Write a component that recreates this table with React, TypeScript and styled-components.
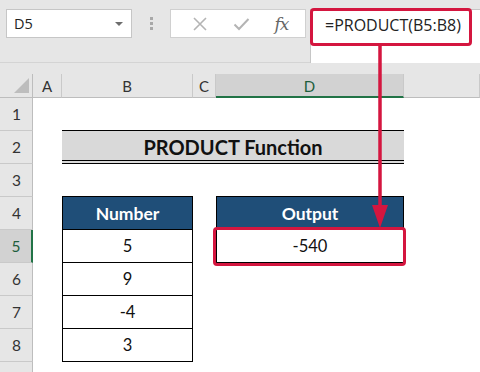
import * as React from "react";
import styled, { createGlobalStyle } from "styled-components";

const GlobalStyle = createGlobalStyle`
  html, body {
    margin: 0;
    padding: 0;
    background: #e6e6e6;
  }
  body {
    font-family: "Lato", "Open Sans", sans-serif;
  }
`;

const RED = "#d4163f";
const GREEN = "#217346";

const Page = styled.div`
  position: relative;
  width: 480px;
  height: 372px;
  overflow: hidden;
  display: flex;
  flex-direction: column;
  background: #e6e6e6;
`;

// ----- formula bar -----
const Toolbar = styled.div`
  height: 63px;
  box-sizing: border-box;
  display: flex;
  align-items: flex-start;
  padding: 9px 0 0 6px;
  border-bottom: 1px solid #d4d4d4;
`;

const NameBox = styled.div`
  width: 126px;
  height: 29px;
  box-sizing: border-box;
  background: #fff;
  border: 1px solid #c6c6c6;
  display: flex;
  align-items: center;
  justify-content: space-between;
  padding: 0 8px 0 7px;
  font-family: "Open Sans", sans-serif;
  font-size: 14.5px;
  color: #222;
`;

const DropArrow = styled.span`
  width: 0;
  height: 0;
  border-left: 4px solid transparent;
  border-right: 4px solid transparent;
  border-top: 4px solid #6d6d6d;
`;

const Grip = styled.div`
  width: 38px;
  height: 29px;
  display: flex;
  flex-direction: column;
  align-items: center;
  justify-content: center;
  gap: 2px;
  span {
    width: 3px;
    height: 3px;
    background: #a8a8a8;
  }
`;

const ButtonBox = styled.div`
  width: 136px;
  height: 29px;
  box-sizing: border-box;
  background: #fff;
  border: 1px solid #d0d0d0;
  display: flex;
  align-items: center;
  justify-content: space-around;
  padding: 0 4px 0 8px;
`;

const Fx = styled.span`
  font-family: "DejaVu Serif", "Liberation Serif", serif;
  font-style: italic;
  font-size: 17px;
  color: #666;
  letter-spacing: -1px;
`;

const FormulaInput = styled.div`
  position: relative;
  flex: 1;
  height: 54px;
  margin-left: 4px;
  box-sizing: border-box;
  background: #fff;
  border-left: 1px solid #c6c6c6;
  border-top: 1px solid #c6c6c6;
  padding: 4px 0 0 14px;
  font-family: "Open Sans", sans-serif;
  font-size: 16px;
  color: #222;
`;

const Highlight = styled.div<{ $top: number; $left: number; $right: number; $bottom: number }>`
  position: absolute;
  top: ${(p) => p.$top}px;
  left: ${(p) => p.$left}px;
  right: ${(p) => p.$right}px;
  bottom: ${(p) => p.$bottom}px;
  border: 3.5px solid ${RED};
  border-radius: 4px;
  pointer-events: none;
`;

// ----- sheet -----
const Sheet = styled.div`
  margin-top: 11px;
  display: grid;
  grid-template-columns: 33px 29px 131px 23px 188px 1fr;
  grid-template-rows: 24px repeat(9, 33px);
  background: #fff;
  font-family: "Lato", "Open Sans", sans-serif;
`;

const Corner = styled.div`
  position: relative;
  background: #e6e6e6;
  border-right: 1px solid #bdbdbd;
  border-bottom: 1px solid #bdbdbd;
  &::after {
    content: "";
    position: absolute;
    right: 3px;
    bottom: 4px;
    width: 15px;
    height: 15px;
    background: #bdbdbd;
    clip-path: polygon(100% 0, 100% 100%, 0 100%);
  }
`;

const ColHead = styled.div<{ $selected?: boolean }>`
  background: ${(p) => (p.$selected ? "#d2d2d2" : "#e6e6e6")};
  border-right: 1px solid #c9c9c9;
  border-bottom: ${(p) => (p.$selected ? `2px solid ${GREEN}` : "1px solid #bdbdbd")};
  display: flex;
  align-items: center;
  justify-content: center;
  font-size: 15px;
  color: ${(p) => (p.$selected ? "#1d5e3c" : "#333")};
  padding-top: 1px;
  box-sizing: border-box;
`;

const RowHead = styled.div<{ $selected?: boolean }>`
  background: ${(p) => (p.$selected ? "#d2d2d2" : "#e6e6e6")};
  border-right: ${(p) => (p.$selected ? `2px solid ${GREEN}` : "1px solid #bdbdbd")};
  border-bottom: 1px solid #c9c9c9;
  display: flex;
  align-items: center;
  justify-content: center;
  font-size: 15.5px;
  color: ${(p) => (p.$selected ? "#1d5e3c" : "#333")};
  box-sizing: border-box;
  padding-left: 1px;
`;

const Cell = styled.div`
  background: #fff;
`;

const Title = styled.div`
  grid-column: 3 / 6;
  margin-top: -1px;
  background: #d9d9d9;
  border-top: 1px solid #000;
  border-bottom: 4px double #000;
  display: flex;
  align-items: center;
  justify-content: center;
  font-weight: 700;
  font-size: 20px;
  color: #111;
  padding-top: 2px;
`;

const TableCell = styled.div<{ $head?: boolean; $first?: boolean }>`
  position: relative;
  box-sizing: border-box;
  background: ${(p) => (p.$head ? "#1f4e78" : "#fff")};
  color: ${(p) => (p.$head ? "#fff" : "#111")};
  font-weight: ${(p) => (p.$head ? 700 : 400)};
  font-size: ${(p) => (p.$head ? "17.5px" : "16.5px")};
  border-left: 1px solid #000;
  border-right: 1px solid #000;
  border-bottom: 1px solid #000;
  border-top: ${(p) => (p.$first ? "1px solid #000" : "none")};
  margin-top: ${(p) => (p.$first ? "-1px" : "0")};
  display: flex;
  align-items: center;
  justify-content: center;
`;

const Arrow = styled.svg`
  position: absolute;
  left: 0;
  top: 0;
  pointer-events: none;
`;

const columns = ["A", "B", "C", "D"];
const numbers = ["5", "9", "-4", "3"];

const App: React.FC = () => {
  const rows: React.ReactNode[] = [];
  for (let r = 1; r <= 9; r++) {
    // row 9 is only a sliver at the bottom edge, its number is not visible
    rows.push(
      <RowHead key={`h${r}`} $selected={r === 5}>
        {r < 9 ? r : null}
      </RowHead>
    );
    // column A
    rows.push(<Cell key={`a${r}`} />);
    if (r === 2) {
      rows.push(<Title key="title">PRODUCT Function</Title>);
      rows.push(<Cell key="e2" />);
      continue;
    }
    // column B
    if (r === 4) {
      rows.push(
        <TableCell key="b4" $head $first>
          Number
        </TableCell>
      );
    } else if (r >= 5 && r <= 8) {
      rows.push(<TableCell key={`b${r}`}>{numbers[r - 5]}</TableCell>);
    } else {
      rows.push(<Cell key={`b${r}`} />);
    }
    // column C
    rows.push(<Cell key={`c${r}`} />);
    // column D
    if (r === 4) {
      rows.push(
        <TableCell key="d4" $head $first>
          Output
        </TableCell>
      );
    } else if (r === 5) {
      rows.push(
        <TableCell key="d5">
          -540
          <Highlight $top={-3} $left={-4} $right={-3} $bottom={-4} />
        </TableCell>
      );
    } else {
      rows.push(<Cell key={`d${r}`} />);
    }
    // column E
    rows.push(<Cell key={`e${r}`} />);
  }

  return (
    <Page>
      <GlobalStyle />
      <Toolbar>
        <NameBox>
          D5
          <DropArrow />
        </NameBox>
        <Grip>
          <span />
          <span />
          <span />
        </Grip>
        <ButtonBox>
          <svg width="16" height="16" viewBox="0 0 16 16">
            <path d="M2 2L14 14M14 2L2 14" stroke="#b4b4b4" strokeWidth="1.6" fill="none" />
          </svg>
          <svg width="17" height="14" viewBox="0 0 17 14">
            <path d="M1.5 7.5L6 12L15.5 2" stroke="#b4b4b4" strokeWidth="2" fill="none" />
          </svg>
          <Fx>fx</Fx>
        </ButtonBox>
        <FormulaInput>
          =PRODUCT(B5:B8)
          <Highlight $top={-2} $left={-1} $right={8} $bottom={17} />
        </FormulaInput>
      </Toolbar>
      <Sheet>
        <Corner />
        {columns.map((c) => (
          <ColHead key={c} $selected={c === "D"}>
            {c}
          </ColHead>
        ))}
        <ColHead />
        {rows}
      </Sheet>
      <Arrow width="480" height="372" viewBox="0 0 480 372">
        <line x1="380" y1="44" x2="380" y2="212" stroke={RED} strokeWidth="3.5" />
        <polygon points="372,205 388,205 380,228" fill={RED} />
      </Arrow>
    </Page>
  );
};

export default App;
